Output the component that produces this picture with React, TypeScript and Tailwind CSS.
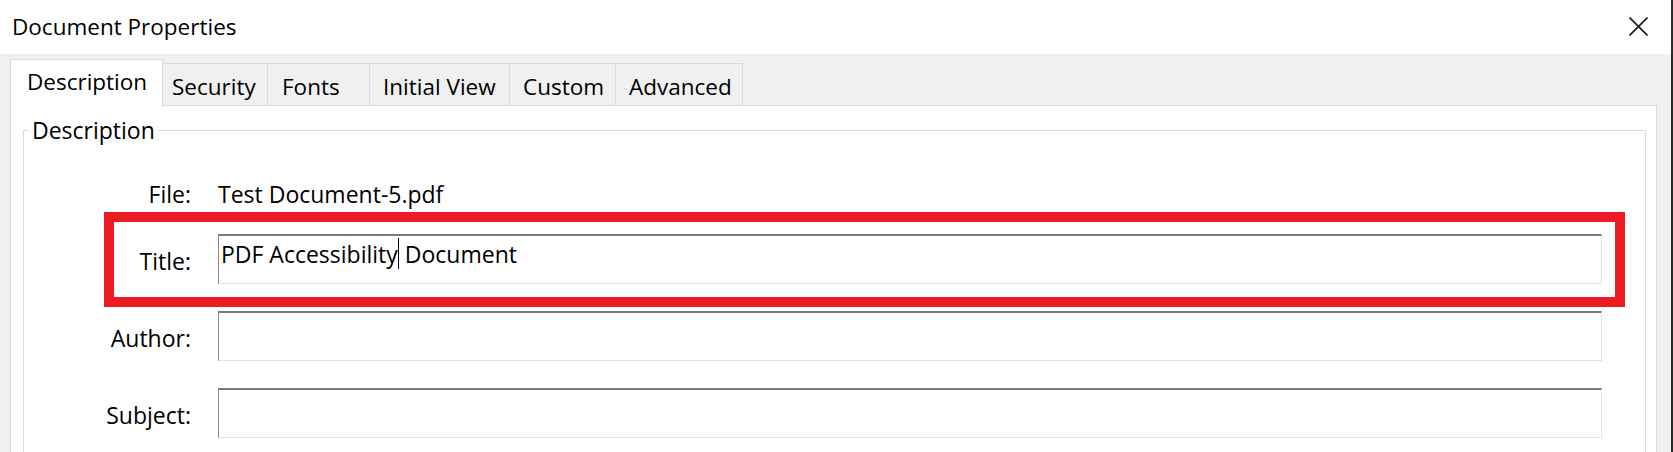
const tabs = [
	{ label: "Security", box: "w-[105px] pl-[9px]" },
	{ label: "Fonts", box: "w-[102px] pl-[14px]" },
	{ label: "Initial View", box: "w-[140px] pl-[13px]" },
	{ label: "Custom", box: "w-[106px] pl-[13px]" },
	{ label: "Advanced", box: "w-[127px] pl-[13px]" },
]

function Field({ label, children }: { label: string; children?: React.ReactNode }) {
	return (
		<div className="flex items-center">
			{/* Label column */}
			<div className="w-[168px] pr-[1px] pt-[4px] text-right">{label}</div>
			{/* Input box */}
			<div className="ml-[26px] w-[1384px] h-[50px] bg-white border-t-2 border-l border-t-[#7a7a7a] border-l-[#8a8a8a] border-r border-b border-r-[#e3e3e3] border-b-[#e3e3e3] pl-[2px] pt-[2px] whitespace-nowrap">
				{children}
			</div>
		</div>
	)
}

export default function App(): React.ReactElement {
	return (
		// Dialog window
		<div className="w-[1673px] h-[452px] flex flex-col bg-[#f0f0f0] border-r-2 border-[#2b2b2b] overflow-hidden font-['Open_Sans',sans-serif] text-[23px] leading-[28px] text-black">
			{/* Title bar */}
			<div className="h-[54px] shrink-0 bg-white flex items-center justify-between pl-[12px] pr-[23px]">
				<span className="text-[22.5px]">Document Properties</span>
				<svg width="19" height="19" viewBox="0 0 19 19" className="mt-[-2px]">
					<path d="M0.5 0.5 L18.5 18.5 M18.5 0.5 L0.5 18.5" stroke="#1a1a1a" strokeWidth="1.6" fill="none" />
				</svg>
			</div>
			{/* Tab strip */}
			<div className="h-[51px] shrink-0 flex items-end pl-[10px] text-[22.5px]">
				<div className="relative z-10 -mb-px w-[153px] h-[47px] bg-white border-l border-t border-r border-[#d9d9d9] pl-[16px] pt-[8px]">
					Description
				</div>
				{tabs.map((t) => (
					<div
						key={t.label}
						className={`${t.box} h-[42px] border-t border-r border-[#d9d9d9] pt-[9px] whitespace-nowrap`}
					>
						{t.label}
					</div>
				))}
			</div>
			{/* Tab panel */}
			<div className="relative flex-1 ml-[10px] mr-[14px] bg-white border border-[#d9d9d9] pl-[12px] pr-[10px] pt-[10px]">
				<fieldset className="border border-[#dcdcdc] h-[400px]">
					<legend className="ml-[5px] px-[3px]">Description</legend>
					<div className="flex flex-col pt-[36px]">
						{/* File row */}
						<div className="flex h-[28px]">
							<div className="w-[168px] pr-[1px] text-right">File:</div>
							<div className="ml-[26px]">Test Document-5.pdf</div>
						</div>
						<div className="flex flex-col gap-[27px] mt-[26px]">
							<Field label="Title:">
								PDF Accessibility
								<span className="inline-block w-px h-[31px] bg-black align-[-6px]" />
								{" "}Document
							</Field>
							<Field label="Author:" />
							<Field label="Subject:" />
						</div>
					</div>
				</fieldset>
				{/* Highlight around the title row */}
				<div className="absolute left-[93px] top-[106px] w-[1521px] h-[95px] border-[10px] border-[#ed1c24]" />
			</div>
		</div>
	)
}
